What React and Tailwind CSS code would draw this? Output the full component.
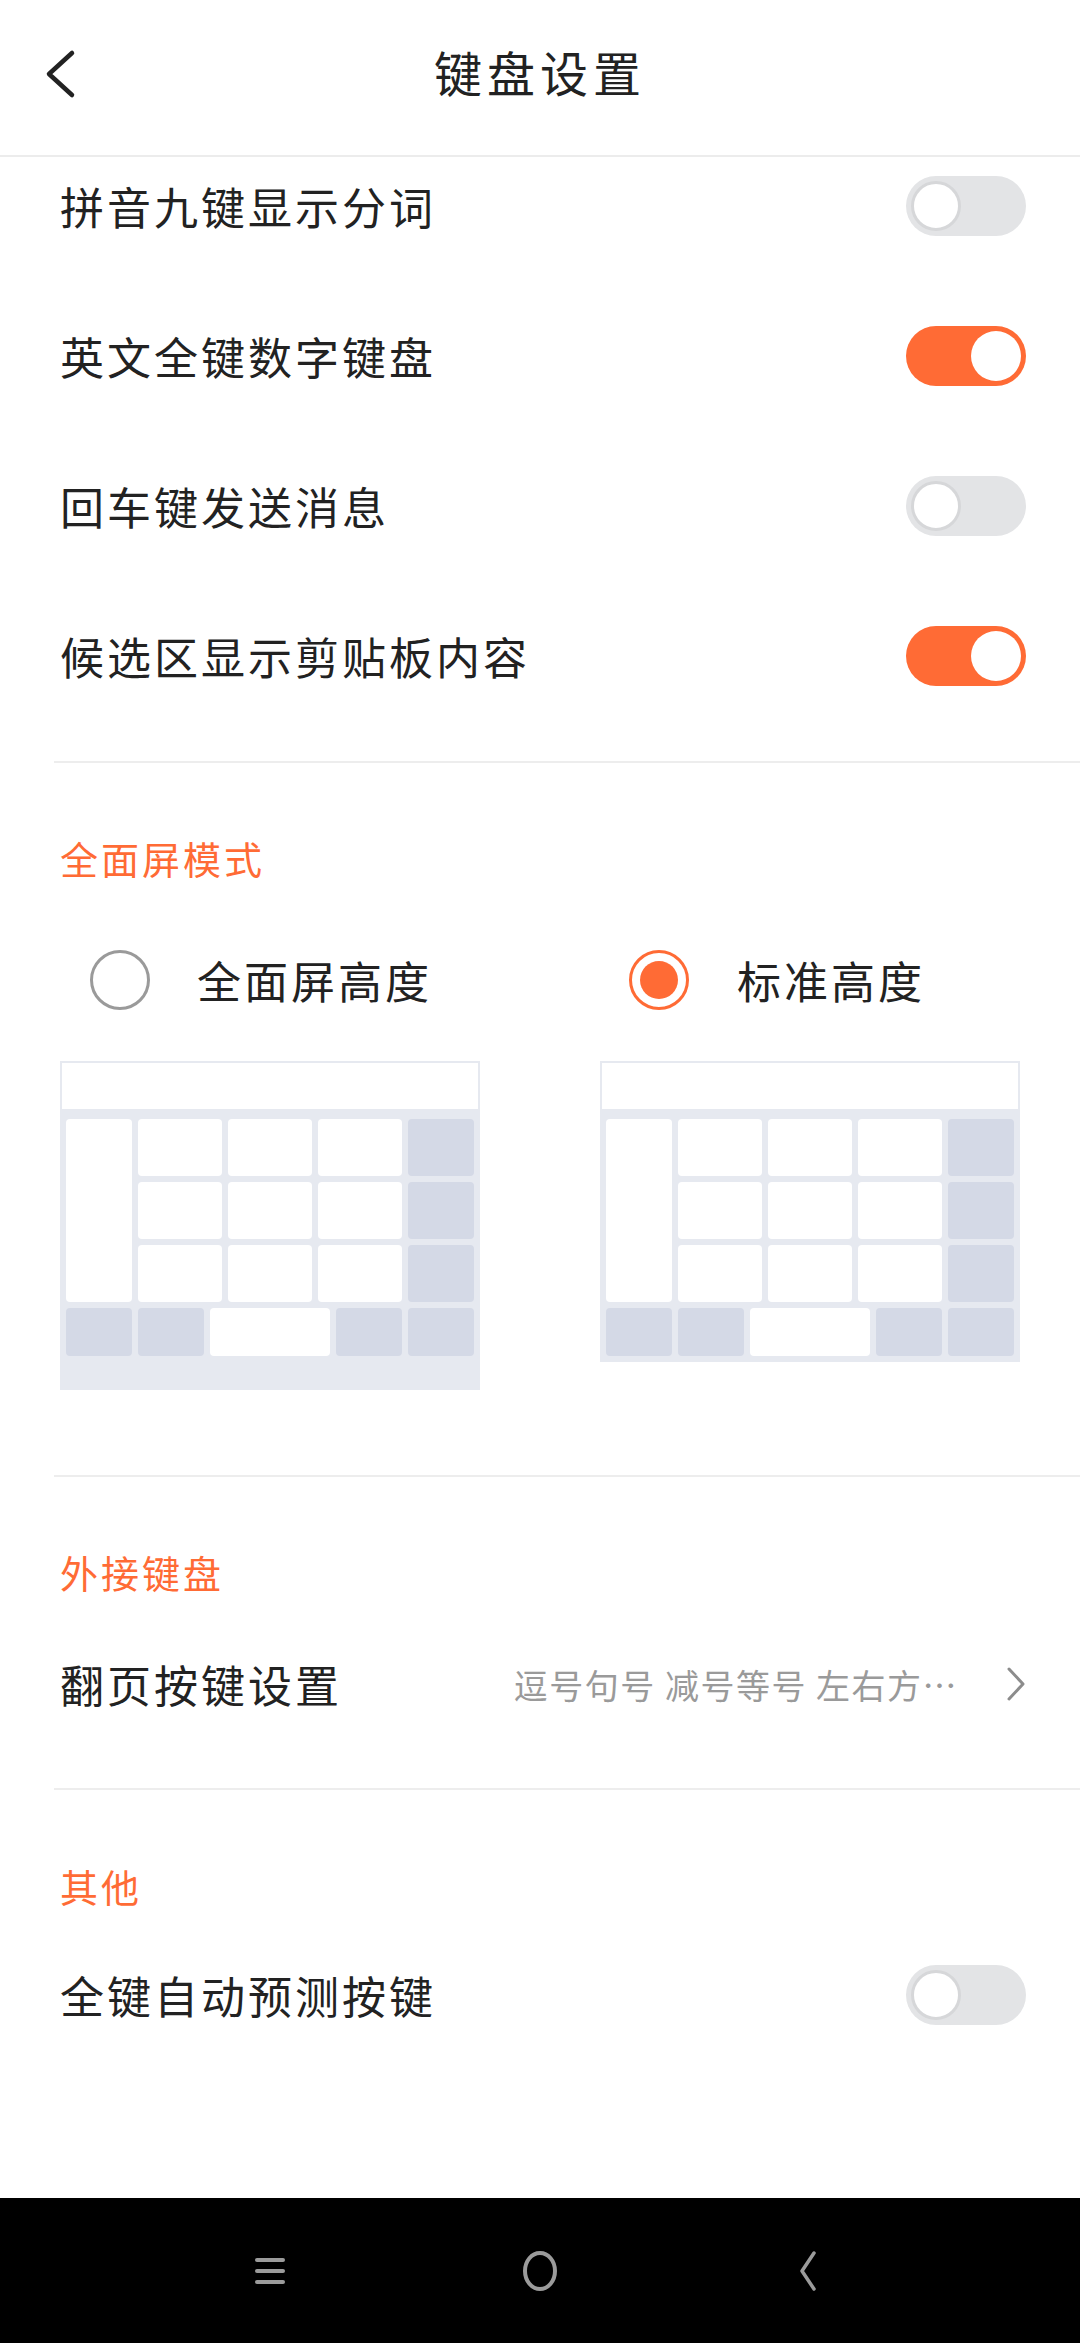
import React from 'react';

// Switch used in the settings rows
const Toggle = ({ on }) => (
  <div
    className={`w-[120px] h-[60px] rounded-full flex items-center px-[5px] ${
      on ? 'bg-[#ff6b35] justify-end' : 'bg-[#e3e4e6] justify-start'
    }`}
  >
    <div
      className={`w-[50px] h-[50px] rounded-full bg-white ${
        on ? '' : 'border-[3px] border-[#d6d7d9]'
      }`}
    />
  </div>
);

const SwitchRow = ({ label, on, className = 'h-[150px]' }) => (
  <div className={`flex items-center justify-between pl-[60px] pr-[54px] ${className}`}>
    <span className="text-[44px] tracking-[3px] text-[#222]">{label}</span>
    <Toggle on={on} />
  </div>
);

const Divider = ({ className = '' }) => (
  <div className={`pl-[54px] ${className}`}>
    <div className="h-[2px] bg-[#ededed]" />
  </div>
);

const SectionTitle = ({ children, className = '' }) => (
  <div
    className={`h-[60px] leading-[60px] pl-[60px] text-[38px] tracking-[3px] text-[#ff6b35] ${className}`}
  >
    {children}
  </div>
);

const Radio = ({ checked }) =>
  checked ? (
    <div className="w-[60px] h-[60px] rounded-full border-[3px] border-[#ff6b35] flex items-center justify-center">
      <div className="w-[38px] h-[38px] rounded-full bg-[#ff6b35]" />
    </div>
  ) : (
    <div className="w-[60px] h-[60px] rounded-full border-[3px] border-[#9a9a9a]" />
  );

const Key = ({ dark, className = '' }) => (
  <div className={`rounded-[4px] ${dark ? 'bg-[#d4d9e6]' : 'bg-white'} ${className}`} />
);

// Small keyboard sketch under each height option
const KeyboardPreview = ({ tall }) => (
  <div className={`w-[420px] bg-[#e6e9f0] ${tall ? 'pb-[34px]' : 'pb-[6px]'}`}>
    <div className="h-[48px] bg-white border-[2px] border-b-0 border-[#e6e9f0]" />
    <div className="px-[6px] pt-[10px]">
      <div className="grid grid-cols-[66px_84px_84px_84px_66px] grid-rows-[57px_57px_57px] gap-[6px]">
        <Key className="row-span-3" />
        <Key />
        <Key />
        <Key />
        <Key dark />
        <Key />
        <Key />
        <Key />
        <Key dark />
        <Key />
        <Key />
        <Key />
        <Key dark />
      </div>
      <div className="flex gap-[6px] mt-[6px] h-[48px]">
        <Key dark className="w-[66px]" />
        <Key dark className="w-[66px]" />
        <Key className="w-[120px]" />
        <Key dark className="w-[66px]" />
        <Key dark className="w-[66px]" />
      </div>
    </div>
  </div>
);

export default function App() {
  return (
    <div className="w-[1080px] h-[2343px] bg-white flex flex-col font-['Noto_Sans_CJK_SC','Noto_Sans',sans-serif] overflow-hidden">
      {/* Header */}
      <div className="h-[157px] relative flex items-center justify-center border-b-[2px] border-[#ececec] shrink-0">
        <svg
          className="absolute left-[44px] top-[49px]"
          width="32"
          height="50"
          viewBox="0 0 32 50"
          fill="none"
          stroke="#222"
          strokeWidth="4.5"
          strokeLinecap="round"
          strokeLinejoin="round"
        >
          <polyline points="28,4 5,25 28,46" />
        </svg>
        <span className="text-[48px] tracking-[5px] text-[#222] -mt-[14px]">键盘设置</span>
      </div>

      {/* Switch list (scrolled) */}
      <SwitchRow label="拼音九键显示分词" on={false} className="h-[124px] pb-[26px]" />
      <SwitchRow label="英文全键数字键盘" on />
      <SwitchRow label="回车键发送消息" on={false} />
      <SwitchRow label="候选区显示剪贴板内容" on />

      <Divider className="mt-[30px]" />

      {/* Full screen mode */}
      <SectionTitle className="mt-[65px]">全面屏模式</SectionTitle>
      <div className="flex mt-[62px] pl-[60px] gap-[120px]">
        <div className="w-[420px] flex flex-col">
          <div className="h-[60px] flex items-center pl-[30px]">
            <Radio checked={false} />
            <span className="ml-[47px] text-[44px] tracking-[3px] text-[#222]">全面屏高度</span>
          </div>
          <div className="mt-[51px]">
            <KeyboardPreview tall />
          </div>
        </div>
        <div className="w-[420px] flex flex-col">
          <div className="h-[60px] flex items-center pl-[29px]">
            <Radio checked />
            <span className="ml-[48px] text-[44px] tracking-[3px] text-[#222]">标准高度</span>
          </div>
          <div className="mt-[51px]">
            <KeyboardPreview />
          </div>
        </div>
      </div>

      <Divider className="mt-[85px]" />

      {/* External keyboard */}
      <SectionTitle className="mt-[65px]">外接键盘</SectionTitle>
      <div className="h-[150px] mt-[7px] flex items-center justify-between pl-[60px] pr-[54px]">
        <span className="text-[44px] tracking-[3px] text-[#222]">翻页按键设置</span>
        <div className="flex items-center">
          <span className="text-[34px] tracking-[1.5px] text-[#9a9a9a]">逗号句号 减号等号 左右方…</span>
          <svg
            className="ml-[48px]"
            width="20"
            height="34"
            viewBox="0 0 20 34"
            fill="none"
            stroke="#8c8c8c"
            strokeWidth="3"
            strokeLinecap="round"
            strokeLinejoin="round"
          >
            <polyline points="3,2 17,17 3,32" />
          </svg>
        </div>
      </div>

      <Divider className="mt-[29px]" />

      {/* Other */}
      <SectionTitle className="mt-[66px]">其他</SectionTitle>
      <SwitchRow label="全键自动预测按键" on={false} className="h-[150px] mt-[4px]" />

      <div className="flex-1" />

      {/* System navigation bar */}
      <div className="h-[145px] bg-black shrink-0 flex items-center pl-[230px] gap-[190px]">
        <div className="w-[80px] flex justify-center">
          <svg width="32" height="30" viewBox="0 0 32 30" fill="none" stroke="#9b9b9b" strokeWidth="4" strokeLinecap="round">
            <line x1="3" y1="4" x2="29" y2="4" />
            <line x1="3" y1="15" x2="29" y2="15" />
            <line x1="3" y1="26" x2="29" y2="26" />
          </svg>
        </div>
        <div className="w-[80px] flex justify-center">
          <svg width="36" height="42" viewBox="0 0 36 42" fill="none" stroke="#9b9b9b" strokeWidth="4">
            <ellipse cx="18" cy="21" rx="15" ry="18" />
          </svg>
        </div>
        <div className="w-[80px] flex justify-center -ml-[2px]">
          <svg width="20" height="42" viewBox="0 0 20 42" fill="none" stroke="#9b9b9b" strokeWidth="3.5" strokeLinecap="round" strokeLinejoin="round">
            <polyline points="16,3 4,21 16,39" />
          </svg>
        </div>
      </div>
    </div>
  );
}
